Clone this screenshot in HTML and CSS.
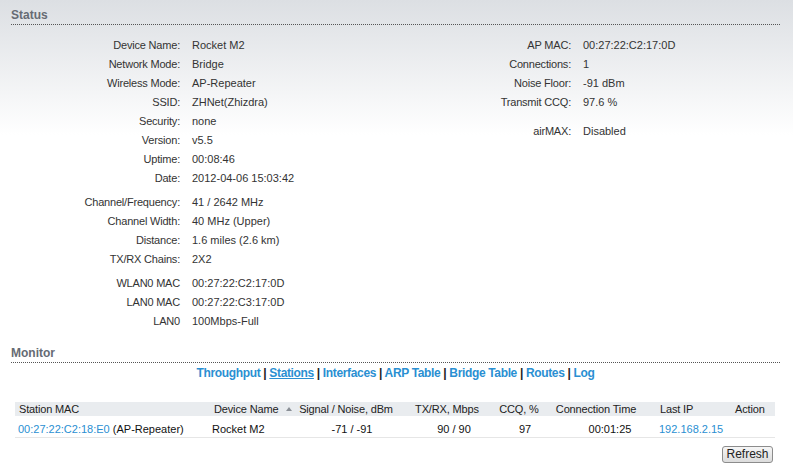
FILE: index.html
```html
<!DOCTYPE html>
<html>
<head>
<meta charset="utf-8">
<link rel="stylesheet" href="styles.css">
</head>
<body>
<div class="page">
  <div class="section-title">Status</div>
  <div class="status">
    <div class="kv kv-left">
      <div class="k">Device Name:</div><div class="v">Rocket M2</div>
      <div class="k">Network Mode:</div><div class="v">Bridge</div>
      <div class="k">Wireless Mode:</div><div class="v">AP-Repeater</div>
      <div class="k">SSID:</div><div class="v">ZHNet(Zhizdra)</div>
      <div class="k">Security:</div><div class="v">none</div>
      <div class="k">Version:</div><div class="v">v5.5</div>
      <div class="k">Uptime:</div><div class="v">00:08:46</div>
      <div class="k">Date:</div><div class="v">2012-04-06 15:03:42</div>
      <div class="sp"></div>
      <div class="k">Channel/Frequency:</div><div class="v">41 / 2642 MHz</div>
      <div class="k">Channel Width:</div><div class="v">40 MHz (Upper)</div>
      <div class="k">Distance:</div><div class="v">1.6 miles (2.6 km)</div>
      <div class="k">TX/RX Chains:</div><div class="v">2X2</div>
      <div class="sp"></div>
      <div class="k">WLAN0 MAC</div><div class="v">00:27:22:C2:17:0D</div>
      <div class="k">LAN0 MAC</div><div class="v">00:27:22:C3:17:0D</div>
      <div class="k">LAN0</div><div class="v">100Mbps-Full</div>
    </div>
    <div class="kv kv-right">
      <div class="k">AP MAC:</div><div class="v">00:27:22:C2:17:0D</div>
      <div class="k">Connections:</div><div class="v">1</div>
      <div class="k">Noise Floor:</div><div class="v">-91 dBm</div>
      <div class="k">Transmit CCQ:</div><div class="v">97.6 %</div>
      <div class="sp sp-big"></div>
      <div class="k">airMAX:</div><div class="v">Disabled</div>
    </div>
  </div>

  <div class="section-title monitor-title">Monitor</div>
  <div class="tabs">
    <a class="tab">Throughput</a> <span class="bar">|</span>
    <a class="tab active">Stations</a> <span class="bar">|</span>
    <a class="tab">Interfaces</a> <span class="bar">|</span>
    <a class="tab">ARP Table</a> <span class="bar">|</span>
    <a class="tab">Bridge Table</a> <span class="bar">|</span>
    <a class="tab">Routes</a> <span class="bar">|</span>
    <a class="tab">Log</a>
  </div>

  <div class="stations">
    <div class="row head">
      <div class="c1">Station MAC</div>
      <div class="c2">Device Name<span class="sort"></span></div>
      <div class="c3">Signal / Noise, dBm</div>
      <div class="c4">TX/RX, Mbps</div>
      <div class="c5">CCQ, %</div>
      <div class="c6">Connection Time</div>
      <div class="c7">Last IP</div>
      <div class="c8">Action</div>
    </div>
    <div class="row data">
      <div class="c1"><a class="lnk">00:27:22:C2:18:E0</a> (AP-Repeater)</div>
      <div class="c2">Rocket M2</div>
      <div class="c3">-71 / -91</div>
      <div class="c4">90 / 90</div>
      <div class="c5">97</div>
      <div class="c6">00:01:25</div>
      <div class="c7"><a class="lnk">192.168.2.15</a></div>
      <div class="c8"></div>
    </div>
  </div>
  <div class="actions">
    <button class="btn">Refresh</button>
  </div>
</div>
</body>
</html>
```
FILE: styles.css
```css
html, body {
  margin: 0;
  padding: 0;
}
body {
  background: linear-gradient(#dcdfe3 0px, #ffffff 135px) no-repeat, #ffffff;
  font-family: "Liberation Sans", Arial, sans-serif;
  font-size: 11px;
  color: #333333;
  width: 793px;
  height: 468px;
  overflow: hidden;
}
.page {
  padding: 0 13px 0 11px;
}
.section-title {
  margin-top: 8px;
  font-size: 12px;
  font-weight: bold;
  color: #666b73;
  line-height: 14px;
  height: 14px;
  padding-bottom: 2px;
  border-bottom: 1px dotted #555555;
}
.monitor-title {
  margin-top: 15px;
}
.status {
  display: grid;
  grid-template-columns: 389px 1fr;
  margin-top: 11px;
}
.kv {
  display: grid;
  column-gap: 12px;
  align-content: start;
}
.kv-left {
  grid-template-columns: 169px 1fr;
}
.kv-right {
  grid-template-columns: 171px 1fr;
}
.k {
  text-align: right;
  line-height: 19px;
  white-space: nowrap;
  letter-spacing: -0.2px;
}
.v {
  line-height: 19px;
  white-space: nowrap;
}
.sp {
  grid-column: 1 / -1;
  height: 5px;
}
.sp-big {
  height: 10px;
}
.tabs {
  margin-top: 3px;
  text-align: center;
  font-size: 12px;
  font-weight: bold;
  line-height: 15px;
  letter-spacing: -0.35px;
  color: #222222;
}
.tab {
  color: #2a8fd2;
  text-decoration: none;
}
.tab.active {
  text-decoration: underline;
}
.bar {
  color: #222222;
}
.stations {
  margin: 21px 5px 0 4px;
}
.row {
  display: grid;
  grid-template-columns: 190px 92px 103px 90px 58px 100px 80px 47px;
  white-space: nowrap;
}
.row.head {
  background: #e9ecef;
  height: 14px;
  line-height: 14px;
  color: #222222;
  letter-spacing: -0.15px;
}
.row.data {
  padding-top: 6px;
  line-height: 15px;
  border-bottom: 1px solid #e6e6e6;
  color: #111111;
}
.c1 { padding-left: 4px; }
.data .c1 { padding-left: 3px; }
.c2 { padding-left: 9px; position: relative; }
.data .c2 { padding-left: 7px; }
.c3, .c4, .c5, .c6 { text-align: center; }
.head .c3 { padding-right: 5px; }
.data .c3 { padding-left: 7px; }
.head .c4 { padding-left: 4px; }
.data .c4 { padding-left: 18px; }
.data .c5 { padding-left: 12px; }
.head .c6 { padding-right: 4px; }
.data .c6 { padding-left: 24px; }
.c7 { padding-left: 12px; }
.data .c7 { padding-left: 11px; }
.c8 { padding-left: 7px; }
.sort {
  position: absolute;
  right: 5px;
  top: 5px;
  width: 0;
  height: 0;
  border-left: 3px solid transparent;
  border-right: 3px solid transparent;
  border-bottom: 4px solid #8a8f96;
}
.lnk {
  color: #2a8fd2;
  text-decoration: none;
}
.actions {
  display: flex;
  justify-content: flex-end;
  margin-top: 8px;
  padding-right: 7px;
}
.btn {
  width: 51px;
  height: 17px;
  padding: 0;
  font-family: "Liberation Sans", Arial, sans-serif;
  font-size: 12px;
  line-height: 15px;
  color: #222222;
  background: linear-gradient(#f6f6f6, #dcdcdc);
  border: 1px solid #8c8c8c;
  border-radius: 3px;
}
```
